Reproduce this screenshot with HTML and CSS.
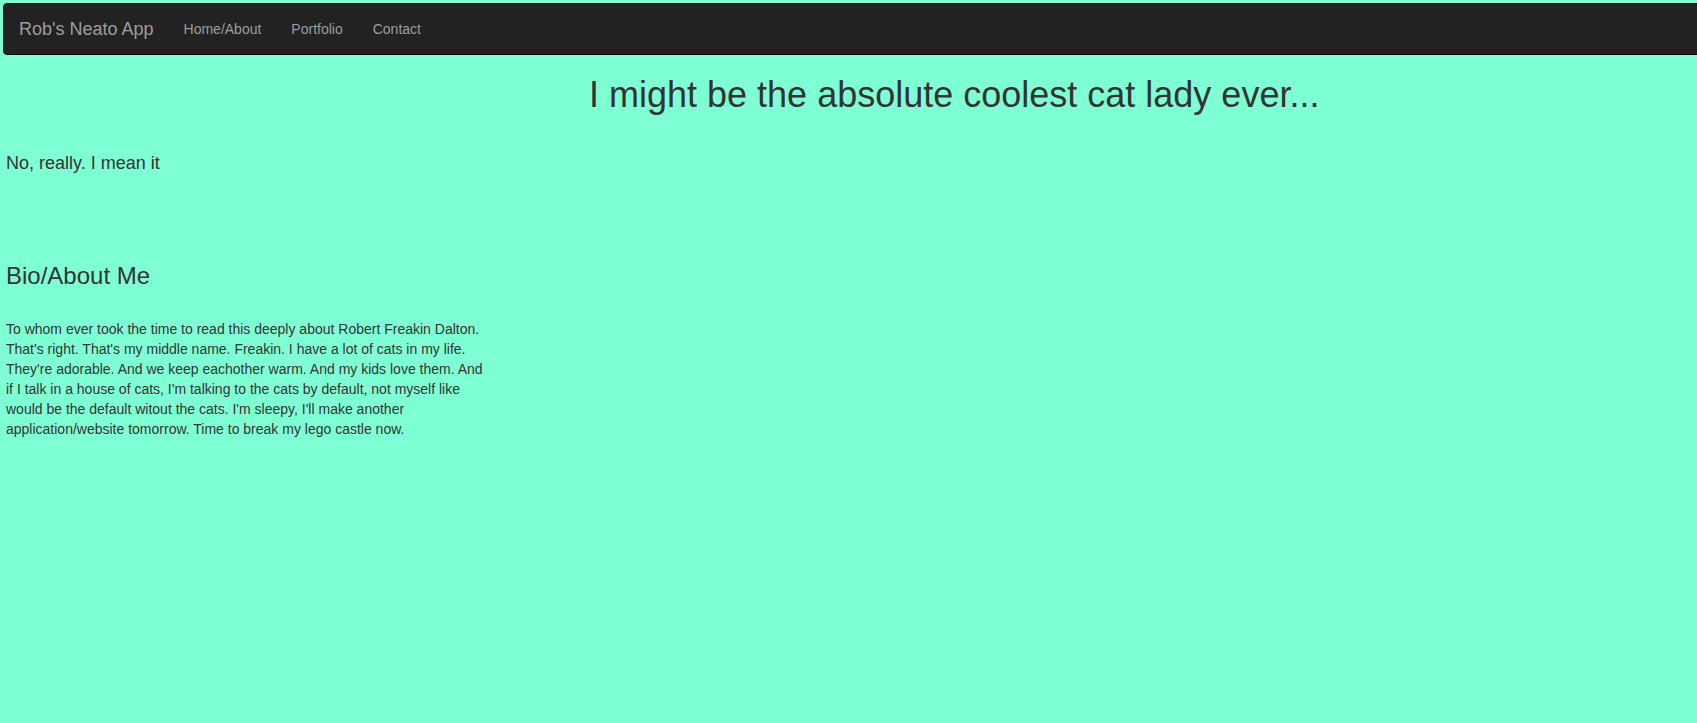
FILE: index.html
```html
<!DOCTYPE html>
<html lang="en">
<head>
<meta charset="utf-8">
<title>Rob's Neato App</title>
<link rel="stylesheet" href="styles.css">
</head>
<body>
<nav class="navbar">
  <a class="brand" href="#">Rob's Neato App</a>
  <ul class="nav">
    <li><a href="#">Home/About</a></li>
    <li><a href="#">Portfolio</a></li>
    <li><a href="#">Contact</a></li>
  </ul>
</nav>
<main class="content">
  <h1 class="title">I might be the absolute coolest cat lady ever...</h1>
  <h4 class="lead">No, really. I mean it</h4>
  <section class="bio">
    <h3 class="bio-title">Bio/About Me</h3>
    <p class="bio-text">To whom ever took the time to read this deeply about Robert Freakin Dalton. That's right. That's my middle name. Freakin. I have a lot of cats in my life. They're adorable. And we keep eachother warm. And my kids love them. And if I talk in a house of cats, I'm talking to the cats by default, not myself like would be the default witout the cats. I'm sleepy, I'll make another application/website tomorrow. Time to break my lego castle now.</p>
  </section>
</main>
</body>
</html>
```

FILE: styles.css
```css
html, body {
  overflow: hidden;
}
body {
  margin: 3px 0 0 3px;
  background: #7fffd4;
  color: #333;
  font-family: "Liberation Sans", Arial, sans-serif;
  font-size: 14px;
  line-height: 1.42857;
  height: 720px;
}
.navbar {
  display: flex;
  align-items: center;
  min-height: 50px;
  background: #222;
  border: 1px solid #080808;
  border-radius: 4px;
  margin-right: -20px;
  padding: 0 15px;
}
.brand {
  font-size: 18px;
  line-height: 20px;
  padding: 15px 15px 15px 0;
  color: #9d9d9d;
  text-decoration: none;
}
.nav {
  display: flex;
  list-style: none;
  margin: 0;
  padding: 0;
}
.nav a {
  display: block;
  padding: 15px;
  line-height: 20px;
  color: #9d9d9d;
  text-decoration: none;
}
.content {
  padding: 0 3px;
}
.title {
  font-size: 36px;
  font-weight: 400;
  line-height: 1.1;
  margin: 20px 0 0 583px;
}
.lead {
  font-size: 18px;
  font-weight: 400;
  line-height: 1.1;
  margin: 39.4px 0 0;
}
.bio-title {
  font-size: 24px;
  font-weight: 400;
  line-height: 1.1;
  margin: 89.7px 0 0;
}
.bio-text {
  width: 486px;
  margin: 30px 0 0;
}
```
